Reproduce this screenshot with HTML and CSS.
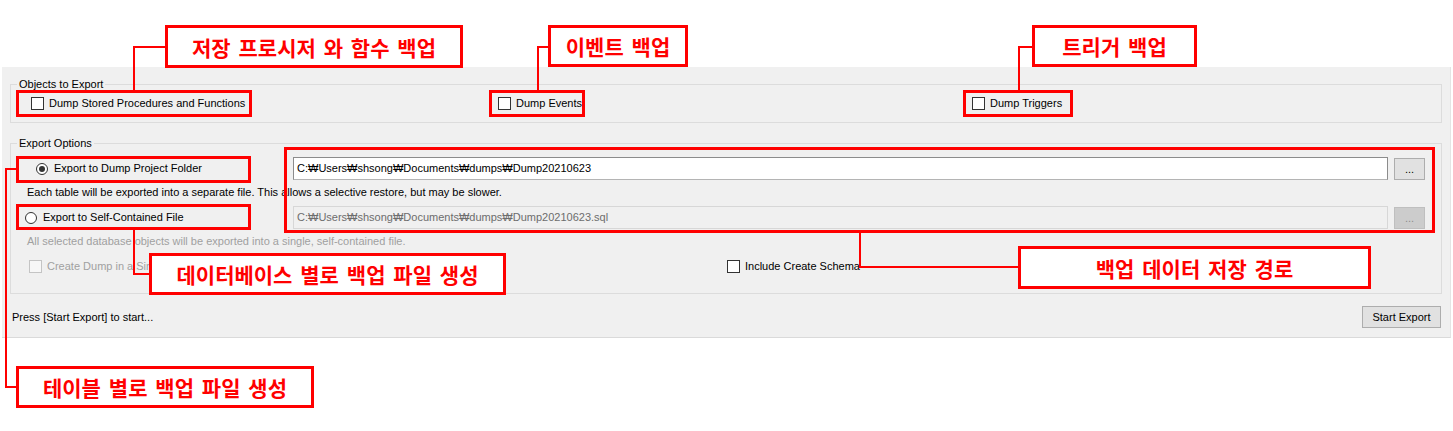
FILE: index.html
```html
<!DOCTYPE html>
<html lang="ko">

<head>
    <meta charset="UTF-8">
    <meta name="viewport" content="width=device-width, initial-scale=1.0">
    <title>Data Export</title>
    <link rel="stylesheet" href="styles.css">
</head>

<body>
    <div class="screen">
        <div class="panel">
            <fieldset class="group">
                <legend>Objects to Export</legend>
                <div class="checks">
                    <label class="check"><span class="box"></span>Dump Stored Procedures and Functions</label>
                    <label class="check"><span class="box"></span>Dump Events</label>
                    <label class="check"><span class="box"></span>Dump Triggers</label>
                </div>
            </fieldset>

            <fieldset class="group options">
                <legend>Export Options</legend>
                <div class="opt-row">
                    <label class="radio folder"><span class="dot on"></span>Export to Dump Project Folder</label>
                    <div class="field">C:₩Users₩shsong₩Documents₩dumps₩Dump20210623</div>
                    <button class="browse">...</button>
                </div>
                <p class="hint">Each table will be exported into a separate file. This allows a selective restore, but may be slower.</p>
                <div class="opt-row next">
                    <label class="radio single"><span class="dot"></span>Export to Self-Contained File</label>
                    <div class="field off">C:₩Users₩shsong₩Documents₩dumps₩Dump20210623.sql</div>
                    <button class="browse off">...</button>
                </div>
                <p class="hint off">All selected database objects will be exported into a single, self-contained file.</p>
                <div class="last-row">
                    <label class="check off"><span class="box"></span>Create Dump in a Single Transaction</label>
                    <label class="check"><span class="box"></span>Include Create Schema</label>
                </div>
            </fieldset>

            <div class="status">
                <span>Press [Start Export] to start...</span>
                <button class="start">Start Export</button>
            </div>
        </div>

        <!-- 설명 주석 -->
        <svg class="wires" width="1453" height="431" viewBox="0 0 1453 431">
            <g fill="none" stroke="#ff0000" stroke-width="3">
                <rect x="17.5" y="91.5" width="233" height="24" />
                <rect x="490.5" y="91.5" width="93" height="24" />
                <rect x="964.5" y="91.5" width="107" height="24" />
                <rect x="17.5" y="157.5" width="232" height="24" />
                <rect x="17.5" y="205.5" width="232" height="23" />
                <rect x="285.5" y="148.5" width="1148" height="83" />
            </g>
            <g fill="none" stroke="#ff0000" stroke-width="2">
                <polyline points="165,47 134,47 134,90" />
                <polyline points="548,47 538,47 538,90" />
                <polyline points="1032,47 1019,47 1019,90" />
                <polyline points="134,230 134,274 149,274" />
                <polyline points="860,233 860,267 1018,267" />
                <polyline points="16,169 6,169 6,387 16,387" />
            </g>
        </svg>
        <div class="tag tag-procs">저장 프로시저 와 함수 백업</div>
        <div class="tag tag-events">이벤트 백업</div>
        <div class="tag tag-triggers">트리거 백업</div>
        <div class="tag tag-single">데이터베이스 별로 백업 파일 생성</div>
        <div class="tag tag-path">백업 데이터 저장 경로</div>
        <div class="tag tag-folder">테이블 별로 백업 파일 생성</div>
    </div>
</body>

</html>
```

FILE: styles.css
```css
body {
    margin: 0;
    background: #fff;
    font-family: "Liberation Sans", Arial, sans-serif;
    font-size: 11px;
    color: #000;
}

.screen {
    position: relative;
    width: 1453px;
    height: 431px;
    overflow: hidden;
}

.panel {
    box-sizing: border-box;
    width: 1449px;
    margin: 67px 0 0 2px;
    padding: 10px 8px 9px;
    background: #f0f0f0;
    border-right: 1px solid #e4e4e4;
    border-bottom: 1px solid #dadada;
}

.group {
    margin: 0;
    padding: 0;
    min-width: 0;
    border: 1px solid #dcdcdc;
}

.group legend {
    margin-left: 6px;
    padding: 0 2px;
    line-height: 14px;
}

.options {
    margin-top: 13px;
    padding-bottom: 20px;
}

.checks {
    display: grid;
    grid-template-columns: 467px 474px 1fr;
    padding: 6px 0 12px 20px;
}

.check,
.radio {
    display: flex;
    align-items: center;
    gap: 5px;
    line-height: 13px;
    white-space: nowrap;
}

.check .box {
    box-sizing: border-box;
    flex: none;
    width: 13px;
    height: 13px;
    border: 1px solid #333;
    background: #fff;
}

.check.off {
    color: #a0a0a0;
}

.check.off .box {
    border-color: #c4c4c4;
    background: #f7f7f7;
}

.radio {
    box-sizing: border-box;
    width: 282px;
    flex: none;
    gap: 6px;
}

.radio.folder {
    padding-left: 25px;
}

.radio.single {
    padding-left: 14px;
}

.dot {
    box-sizing: border-box;
    width: 12px;
    height: 12px;
    border: 1px solid #333;
    border-radius: 50%;
    background: #fff;
    display: flex;
    align-items: center;
    justify-content: center;
}

.dot.on::after {
    content: "";
    width: 6px;
    height: 6px;
    border-radius: 50%;
    background: #333;
}

.opt-row {
    display: flex;
    align-items: center;
    margin-top: 7px;
}

.field {
    flex: 1;
    box-sizing: border-box;
    height: 23px;
    padding: 0 3px;
    line-height: 21px;
    background: #fff;
    border: 1px solid #8c8c8c;
    border-bottom-color: #b4b4b4;
    white-space: nowrap;
    overflow: hidden;
}

.field.off {
    background: #f0f0f0;
    border-color: #d7d7d7;
    color: #6d6d6d;
}

button {
    font-family: inherit;
    font-size: 11px;
    padding: 0;
    color: #000;
    background: #e1e1e1;
    border: 1px solid #adadad;
}

.browse {
    width: 31px;
    height: 22px;
    margin: 0 16px 0 6px;
    line-height: 18px;
}

.browse.off {
    background: #cccccc;
    border-color: #bfbfbf;
    color: #8d8d8d;
}

.hint {
    margin: 6px 0 0 16px;
    line-height: 13px;
}

.hint.off {
    color: #a0a0a0;
}

.last-row {
    display: grid;
    grid-template-columns: 716px 1fr;
    margin-top: 12px;
}

.last-row .check.off {
    padding-left: 18px;
}

.status {
    display: flex;
    align-items: center;
    justify-content: space-between;
    margin-top: 12px;
    padding: 0 1px 0 2px;
}

.start {
    width: 79px;
    height: 22px;
}

/* 주석 레이어 */
.wires {
    position: absolute;
    left: 0;
    top: 0;
    pointer-events: none;
}

.tag {
    position: absolute;
    box-sizing: border-box;
    display: flex;
    align-items: center;
    justify-content: center;
    border: 3px solid #ff0000;
    background: #fff;
    color: #f00;
    font: bold 21px "Noto Sans CJK KR", sans-serif;
    word-spacing: 2px;
    white-space: nowrap;
}

.tag-procs {
    left: 165px;
    top: 25px;
    width: 298px;
    height: 43px;
}

.tag-events {
    left: 548px;
    top: 25px;
    width: 140px;
    height: 42px;
}

.tag-triggers {
    left: 1032px;
    top: 25px;
    width: 165px;
    height: 42px;
}

.tag-single {
    left: 149px;
    top: 253px;
    width: 357px;
    height: 42px;
}

.tag-path {
    left: 1018px;
    top: 246px;
    width: 353px;
    height: 43px;
}

.tag-folder {
    left: 16px;
    top: 366px;
    width: 298px;
    height: 42px;
}
```
